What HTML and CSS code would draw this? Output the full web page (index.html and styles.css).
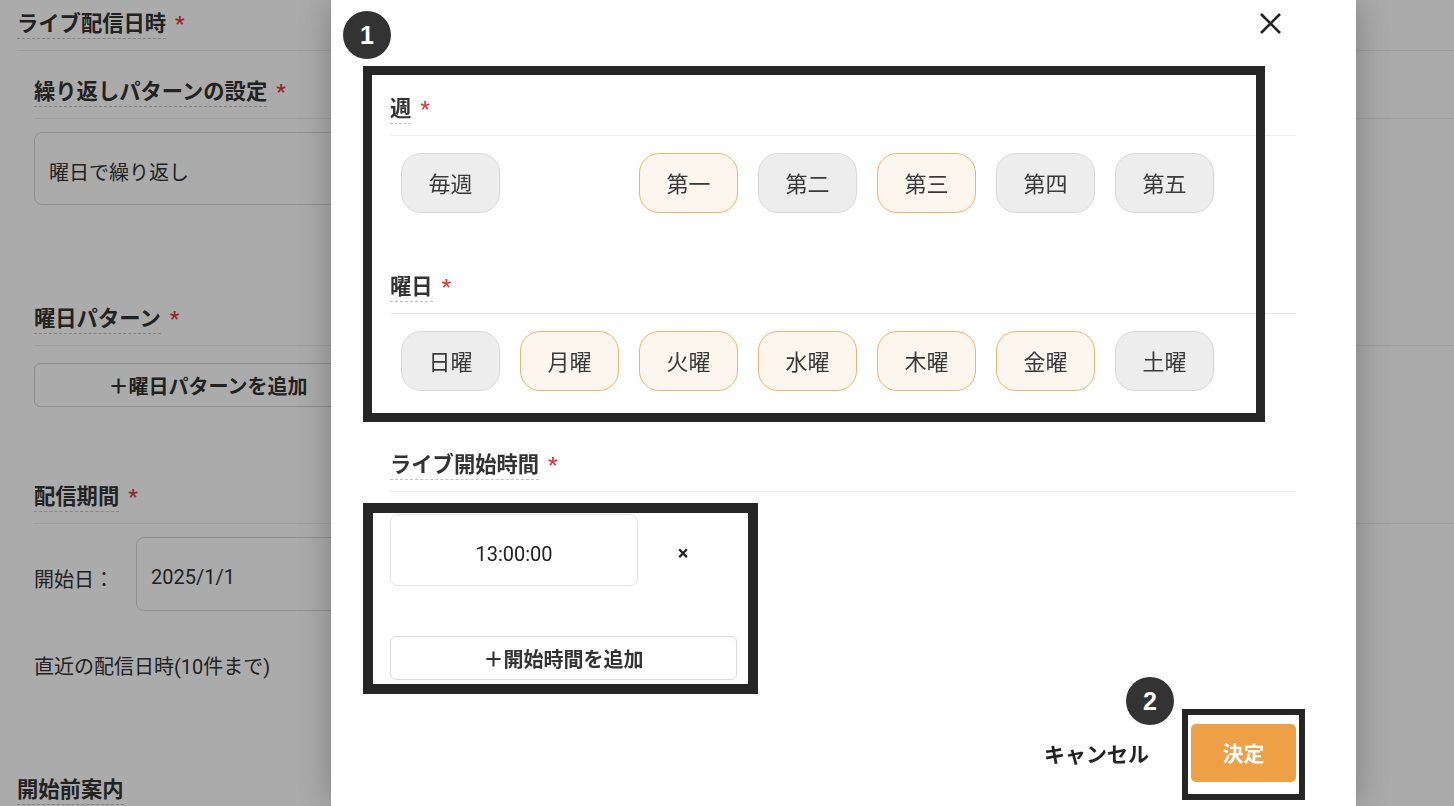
FILE: index.html
```html
<!DOCTYPE html>
<html lang="ja">
<head>
<meta charset="utf-8">
<title>ライブ配信日時</title>
<link rel="stylesheet" href="styles.css">
</head>
<body>
<main class="page">
  <div class="field-head first"><span class="label">ライブ配信日時</span><span class="req">*</span></div>
  <div class="sub">
    <div class="field-head sh1"><span class="label">繰り返しパターンの設定</span><span class="req">*</span></div>
    <div class="select">曜日で繰り返し</div>
    <div class="field-head sh2"><span class="label">曜日パターン</span><span class="req">*</span></div>
    <button class="bg-add">＋曜日パターンを追加</button>
    <div class="field-head sh3"><span class="label">配信期間</span><span class="req">*</span></div>
    <div class="date-row"><span class="date-label">開始日：</span><div class="date-input">2025/1/1</div></div>
    <p class="recent">直近の配信日時(10件まで)</p>
  </div>
  <div class="field-head last"><span class="label">開始前案内</span></div>
</main>

<div class="overlay"></div>

<div class="modal">
  <div class="modal-head">
    <svg class="close" width="23" height="23" viewBox="0 0 23 23" aria-label="閉じる">
      <path d="M2 2 L21 21 M21 2 L2 21" stroke="#222" stroke-width="2.6" stroke-linecap="butt" fill="none"/>
    </svg>
  </div>

  <div class="m-head"><span class="label">週</span><span class="req">*</span></div>
  <div class="chips">
    <button class="chip">毎週</button>
    <span class="chip-gap"></span>
    <button class="chip on">第一</button>
    <button class="chip">第二</button>
    <button class="chip on">第三</button>
    <button class="chip">第四</button>
    <button class="chip">第五</button>
  </div>

  <div class="m-head"><span class="label">曜日</span><span class="req">*</span></div>
  <div class="chips">
    <button class="chip">日曜</button>
    <button class="chip on">月曜</button>
    <button class="chip on">火曜</button>
    <button class="chip on">水曜</button>
    <button class="chip on">木曜</button>
    <button class="chip on">金曜</button>
    <button class="chip">土曜</button>
  </div>

  <div class="m-head"><span class="label">ライブ開始時間</span><span class="req">*</span></div>
  <div class="time-row">
    <div class="time-input">13:00:00</div>
    <button class="remove">×</button>
  </div>
  <button class="add-time">＋開始時間を追加</button>

  <div class="footer">
    <button class="cancel">キャンセル</button>
    <button class="ok">決定</button>
  </div>

  <div class="frame frame1"></div>
  <div class="frame frame2"></div>
  <div class="frame frame3"></div>
  <div class="badge badge1">1</div>
  <div class="badge badge2">2</div>
</div>
</body>
</html>
```

FILE: styles.css
```css
* { box-sizing: border-box; }
html, body { margin: 0; padding: 0; }
body {
  width: 1454px;
  height: 806px;
  overflow: hidden;
  background: #fff;
  font-family: Roboto, "Noto Sans CJK JP", sans-serif;
  color: #333;
}
button { font-family: inherit; color: inherit; cursor: pointer; }

/* ---------- background page ---------- */
.page { padding-left: 17px; }
.sub { padding-left: 17px; }
.field-head {
  padding-bottom: 11px;
  border-bottom: 1px solid #ececec;
  display: flex;
  align-items: center;
}
.label {
  display: inline-block;
  font-size: 21.3px;
  font-weight: 700;
  line-height: 28px;
  border-bottom: 1px dashed #c4c4c4;
}
.req {
  color: #e0393e;
  font-size: 21px;
  font-weight: 700;
  margin-left: 9px;
  line-height: 28px;
  align-self: flex-start;
}
.field-head.first { padding-top: 10px; }
.field-head.sh1 { padding-top: 27px; }
.field-head.sh2 { padding-top: 100px; }
.field-head.sh3 { padding-top: 76px; }
.field-head.last { padding-top: 95px; border-bottom: none; }
.select {
  margin-top: 13px;
  width: 640px;
  height: 73px;
  border: 1px solid #d7d7d7;
  border-radius: 8px;
  padding-left: 14px;
  padding-top: 5px;
  display: flex;
  align-items: center;
  font-size: 20px;
}
.bg-add {
  margin-top: 17px;
  width: 348px;
  height: 44px;
  border: 1px solid #d2d2d2;
  border-radius: 6px;
  background: #fff;
  font-size: 20px;
  font-weight: 700;
  display: block;
}
.date-row {
  margin-top: 13px;
  display: flex;
  align-items: center;
}
.date-label { width: 102px; font-size: 20px; padding-top: 8px; }
.date-input {
  width: 400px;
  height: 74px;
  border: 1px solid #d7d7d7;
  border-radius: 8px;
  padding-left: 14px;
  display: flex;
  align-items: center;
  font-size: 20px;
  padding-top: 6px;
}
.recent {
  margin: 42px 0 0;
  line-height: 28px;
  font-size: 20px;
}

.overlay {
  position: fixed;
  inset: 0;
  background: rgba(0, 0, 0, 0.33);
}

/* ---------- modal ---------- */
.modal {
  position: fixed;
  top: 0;
  bottom: 0;
  left: 331px;
  width: 1025px;
  background: #fff;
  padding: 0 60px 0 59px;
  box-shadow: 0 0 36px rgba(0, 0, 0, 0.28);
  overflow: hidden;
}
.modal-head {
  display: flex;
  justify-content: flex-end;
  padding-top: 12px;
  height: 35px;
}
.close { margin-right: 14px; display: block; }

.m-head {
  display: flex;
  align-items: center;
  padding-top: 60px;
  padding-bottom: 11px;
  border-bottom: 1px solid #ededed;
}
.chips {
  margin-top: 17px;
  padding-left: 11px;
  display: grid;
  grid-template-columns: repeat(7, 99px);
  column-gap: 20px;
}
.chip {
  height: 60px;
  border: 1px solid #d8d8d8;
  background: #ededed;
  border-radius: 20px;
  font-size: 22px;
  color: #3a3a3a;
  padding: 0 0 3px;
  display: flex;
  align-items: center;
  justify-content: center;
}
.chip.on {
  background: #fcf6ef;
  border-color: #f1b36b;
}

.time-row {
  margin-top: 22px;
  display: flex;
  align-items: center;
}
.time-input {
  width: 248px;
  height: 72px;
  border: 1px solid #e3e3e3;
  border-radius: 8px;
  display: flex;
  align-items: center;
  justify-content: center;
  padding-top: 7px;
  font-size: 20px;
  color: #222;
}
.remove {
  margin-left: 35px;
  width: 20px;
  padding: 6px 0 0;
  border: none;
  background: none;
  font-size: 20px;
  font-weight: 700;
  color: #222;
  line-height: 20px;
}
.add-time {
  display: block;
  margin-top: 50px;
  width: 347px;
  height: 44px;
  border: 1px solid #dcdcdc;
  border-radius: 6px;
  background: #fff;
  font-size: 20px;
  font-weight: 700;
  color: #333;
  padding: 0;
}
.footer {
  margin-top: 44px;
  display: flex;
  justify-content: flex-end;
  align-items: center;
}
.cancel {
  border: none;
  background: none;
  padding: 0;
  font-size: 21px;
  font-weight: 700;
  color: #222;
}
.ok {
  margin-left: 42px;
  width: 105px;
  height: 58px;
  border: none;
  border-radius: 5px;
  background: #eda046;
  color: #fff;
  font-size: 21px;
  font-weight: 700;
  padding: 0 0 3px;
}

/* ---------- annotations ---------- */
.frame {
  position: absolute;
  border: 9px solid #262626;
  pointer-events: none;
}
.frame1 { left: 32px; top: 66px; width: 902px; height: 356px; }
.frame2 { left: 32px; top: 503px; width: 395px; height: 191px; border-width: 10px; }
.frame3 { left: 851px; top: 709px; width: 123px; height: 91px; border-width: 6px; }
.badge {
  position: absolute;
  width: 48px;
  height: 48px;
  border-radius: 50%;
  background: #333;
  color: #fff;
  font-family: "Liberation Sans", Arial, sans-serif;
  font-weight: 700;
  font-size: 25px;
  display: flex;
  align-items: center;
  justify-content: center;
}
.badge1 { left: 12px; top: 11px; }
.badge2 { left: 795px; top: 677px; }
```
